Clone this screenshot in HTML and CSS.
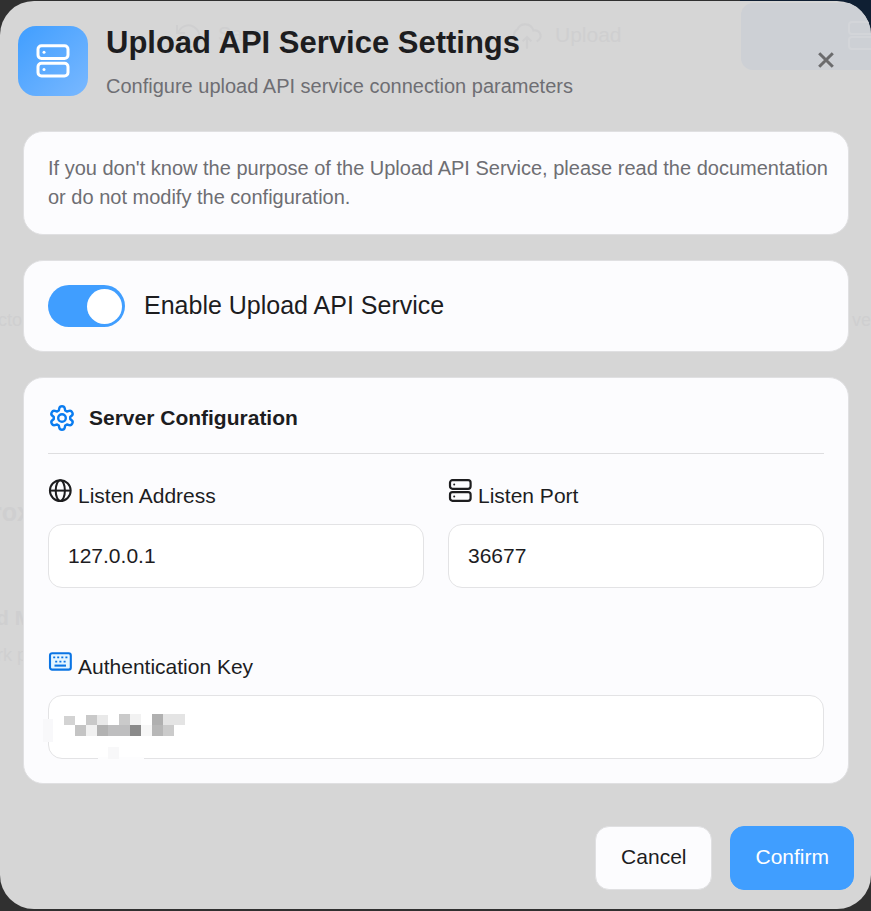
FILE: index.html
```html
<!DOCTYPE html>
<html lang="en">
<head>
    <meta charset="UTF-8">
    <meta name="viewport" content="width=device-width, initial-scale=1.0">
    <title>Upload API Service Settings</title>
    <link rel="stylesheet" href="styles.css">
</head>
<body>

    <div class="modal" role="dialog" aria-labelledby="modalTitle">

        <!-- Page showing faintly through the modal -->
        <div class="ghost" aria-hidden="true">
            <svg class="ghost-undo" viewBox="0 0 28 28"><path d="M3 3v8h8M4 11a11 11 0 1 1 1 9"/></svg>
            <span class="ghost-save">Save</span>
            <svg class="ghost-cloud" viewBox="0 0 28 28"><path d="M6 18a6 6 0 0 1-1-11 8 8 0 0 1 15 1 5 5 0 0 1 3 10M14 25V14M10 18l4-4 4 4"/></svg>
            <span class="ghost-upload">Upload</span>
            <div class="ghost-button">
                <svg class="ghost-server" viewBox="0 0 32 32"><rect x="2" y="2" width="28" height="12" rx="3"/><rect x="2" y="17" width="28" height="12" rx="3"/></svg>
            </div>
            <span class="ghost-left-1">cto</span>
            <span class="ghost-left-2">rox</span>
            <span class="ghost-left-3">d M</span>
            <span class="ghost-left-4">rk p</span>
            <span class="ghost-right">ve</span>
        </div>

        <div class="modal-header">
            <div class="header-icon">
                <svg viewBox="0 0 34 34" width="34" height="34" fill="none" stroke="#fff" stroke-width="3">
                    <rect x="2" y="1.7" width="30" height="12.8" rx="3.5"/>
                    <rect x="2" y="19.2" width="30" height="12.8" rx="3.5"/>
                    <circle cx="8" cy="8.2" r="1.5" fill="#fff" stroke="none"/>
                    <circle cx="8" cy="25.6" r="1.5" fill="#fff" stroke="none"/>
                </svg>
            </div>
            <div class="header-text">
                <h2 id="modalTitle">Upload API Service Settings</h2>
                <p>Configure upload API service connection parameters</p>
            </div>
            <button class="close-btn" type="button" aria-label="Close">
                <svg viewBox="0 0 16 16" width="16" height="16" fill="none" stroke="#6b6b6d" stroke-width="3"><path d="M1.2 1.2l13.6 13.6M14.8 1.2L1.2 14.8"/></svg>
            </button>
        </div>

        <div class="modal-body">
            <div class="card notice">
                <p>If you don't know the purpose of the Upload API Service, please read the documentation or do not modify the configuration.</p>
            </div>

            <div class="card switch-card">
                <input class="switch" type="checkbox" id="enableService" checked>
                <label for="enableService">Enable Upload API Service</label>
            </div>

            <div class="card config-card">
                <div class="section-title">
                    <svg viewBox="0 0 28 28" width="28" height="28" fill="none" stroke="#0a7cf0" stroke-width="2.4" stroke-linejoin="round">
                        <path d="M11.3 4.2 Q11.7 2.2 14 2.2 Q16.3 2.2 16.7 4.2 L17.2 6.5 L18.9 7.5 L21.2 6.8 Q23.1 6.3 24.1 8.1 Q25.4 10.2 23.9 11.5 L22.2 13 L22.2 15 L23.9 16.5 Q25.4 17.8 24.1 19.9 Q23.1 21.7 21.2 21.2 L18.9 20.5 L17.2 21.5 L16.7 23.8 Q16.3 25.8 14 25.8 Q11.7 25.8 11.3 23.8 L10.8 21.5 L9.1 20.5 L6.8 21.2 Q4.9 21.7 3.9 19.9 Q2.6 17.8 4.1 16.5 L5.8 15 L5.8 13 L4.1 11.5 Q2.6 10.2 3.9 8.1 Q4.9 6.3 6.8 6.8 L9.1 7.5 L10.8 6.5 Z"/>
                        <circle cx="14" cy="14" r="3.8"/>
                    </svg>
                    <h3>Server Configuration</h3>
                </div>

                <div class="form-row">
                    <div class="form-group">
                        <label for="listenAddress">
                            <svg viewBox="0 0 24 24" width="24" height="24" fill="none" stroke="#1d1d1f" stroke-width="2">
                                <circle cx="12.3" cy="12.6" r="10.4"/>
                                <ellipse cx="12.3" cy="12.6" rx="4.6" ry="10.4"/>
                                <path d="M2 12.6h20.6"/>
                            </svg>
                            <span>Listen Address</span>
                        </label>
                        <input type="text" id="listenAddress" value="127.0.0.1">
                    </div>
                    <div class="form-group">
                        <label for="listenPort">
                            <svg viewBox="0 0 24 24" width="24" height="24" fill="none" stroke="#1d1d1f" stroke-width="2.2">
                                <rect x="2" y="2.2" width="20.6" height="8.6" rx="2.5"/>
                                <rect x="2" y="14.2" width="20.6" height="8.6" rx="2.5"/>
                                <circle cx="6.2" cy="6.5" r="1" fill="#1d1d1f" stroke="none"/>
                                <circle cx="6.2" cy="18.5" r="1" fill="#1d1d1f" stroke="none"/>
                            </svg>
                            <span>Listen Port</span>
                        </label>
                        <input type="text" id="listenPort" value="36677">
                    </div>
                </div>

                <div class="form-group key-group">
                    <label for="authKey">
                        <svg viewBox="0 0 24 24" width="24" height="24" fill="none" stroke="#0a74e4" stroke-width="2.1">
                            <rect x="2" y="4.2" width="20.8" height="16.4" rx="2.2" fill="#e4f5ff"/>
                            <path d="M5.2 8.4h2M9.2 8.4h2M13.3 8.4h2M17.4 8.4h2M7.2 12.6h2M11.4 12.6h2M15.6 12.6h2" stroke-width="1.7"/>
                            <path d="M6.5 16.6h11.5"/>
                        </svg>
                        <span>Authentication Key</span>
                    </label>
                    <div class="key-field">
                        <input type="password" id="authKey">
                        <!-- pixelated key -->
                        <svg class="key-mask" viewBox="0 0 144 50" width="144" height="50" shape-rendering="crispEdges" aria-hidden="true">
                            <rect x="0" y="9" width="10" height="23" fill="#f8f8fa"/>
                            <rect x="21" y="6" width="11" height="9" fill="#d3d3d3"/>
                            <rect x="43" y="5" width="11" height="10" fill="#c9c9c9"/>
                            <rect x="54" y="5" width="11" height="10" fill="#e9e9e9"/>
                            <rect x="76" y="4" width="11" height="11" fill="#cacaca"/>
                            <rect x="87" y="4" width="11" height="11" fill="#f2f2f2"/>
                            <rect x="109" y="4" width="11" height="11" fill="#b0b0b0"/>
                            <rect x="120" y="4" width="22" height="11" fill="#e4e4e4"/>
                            <rect x="32" y="15" width="11" height="11" fill="#c4c4c4"/>
                            <rect x="43" y="15" width="11" height="11" fill="#f1f1f1"/>
                            <rect x="54" y="15" width="11" height="11" fill="#b2b2b2"/>
                            <rect x="65" y="15" width="22" height="11" fill="#bebebf"/>
                            <rect x="87" y="15" width="11" height="11" fill="#8a8a8a"/>
                            <rect x="98" y="15" width="11" height="11" fill="#f7f7f7"/>
                            <rect x="109" y="15" width="11" height="11" fill="#b7b7b7"/>
                            <rect x="120" y="15" width="11" height="11" fill="#cbcbcb"/>
                            <rect x="55" y="47" width="46" height="3" fill="#fdfdfe"/>
                            <rect x="65" y="37" width="11" height="12" fill="#f8f8f9"/>
                        </svg>
                    </div>
                </div>
            </div>
        </div>

        <div class="modal-footer">
            <button class="btn cancel-btn" type="button">Cancel</button>
            <button class="btn confirm-btn" type="button">Confirm</button>
        </div>
    </div>

</body>
</html>
```
FILE: styles.css
```css
* {
    margin: 0;
    padding: 0;
    box-sizing: border-box;
}
body {
    font-family: "Liberation Sans", Arial, sans-serif;
    background: linear-gradient(to right, #303030 85%, #0f1f33 85%) no-repeat #303030;
    background-size: 100% 60px;
    color: #1d1d1f;
    min-height: 100vh;
    padding: 1px 0 2px;
}
.modal {
    position: relative;
    display: flex;
    flex-direction: column;
    min-height: calc(100vh - 3px);
    background: #d6d6d6;
    border-radius: 34px;
    overflow: hidden;
}

/* header */
.modal-header {
    position: relative;
    display: flex;
    align-items: flex-start;
    gap: 18px;
    padding: 25px 34px 31px 18px;
}
.header-icon {
    display: flex;
    align-items: center;
    justify-content: center;
    width: 70px;
    height: 70px;
    border-radius: 18px;
    background: linear-gradient(135deg, #409eff, #79b8ff);
}
.header-text {
    flex: 1;
}
.header-text h2 {
    font-size: 31px;
    line-height: 34px;
}
.header-text p {
    font-size: 20px;
    line-height: 28px;
    margin-top: 12px;
    color: #6e6e73;
}
.close-btn {
    display: flex;
    align-items: center;
    justify-content: center;
    width: 22px;
    height: 68px;
    border: none;
    background: none;
    cursor: pointer;
}

/* cards */
.modal-body {
    position: relative;
    display: flex;
    flex-direction: column;
    gap: 25px;
    padding: 0 22px 0 23px;
}
.card {
    background: #fcfcfe;
    border: 1px solid #e0e0e2;
    border-radius: 20px;
    padding: 24px;
}
.notice {
    padding: 22px 16px 22px 24px;
}
.notice p {
    font-size: 20px;
    line-height: 29px;
    color: #6e6e73;
}
.switch-card {
    display: flex;
    align-items: center;
    gap: 19px;
}
.switch-card label {
    font-size: 25px;
    line-height: 30px;
    padding-bottom: 2px;
}
.config-card {
    padding-top: 26px;
}
.switch {
    appearance: none;
    display: flex;
    align-items: center;
    justify-content: flex-end;
    width: 77px;
    height: 42px;
    padding: 3px;
    border-radius: 21px;
    background: #409eff;
    cursor: pointer;
}
.switch::before {
    content: "";
    width: 35px;
    height: 35px;
    border-radius: 50%;
    background: #fff;
}
.section-title {
    display: flex;
    align-items: center;
    gap: 13px;
    padding-bottom: 21px;
    border-bottom: 1px solid #dedee0;
}
.section-title h3 {
    font-size: 21px;
    line-height: 28px;
}

/* form */
.form-row {
    display: grid;
    grid-template-columns: 1fr 1fr;
    gap: 24px;
    margin-top: 24px;
}
.key-group {
    margin-top: 61px;
}
.form-group label {
    display: flex;
    gap: 6px;
    height: 46px;
    font-size: 21px;
    line-height: 36px;
}
.form-group input {
    display: block;
    width: 100%;
    height: 64px;
    padding: 0 19px;
    border: 1px solid #e3e3e5;
    border-radius: 14px;
    background: #fff;
    color: #1d1d1f;
    font-family: inherit;
    font-size: 21px;
}
.key-field {
    position: relative;
}
.key-mask {
    position: absolute;
    left: -5px;
    top: 15px;
}

/* footer */
.modal-footer {
    position: relative;
    display: flex;
    justify-content: flex-end;
    gap: 18px;
    margin-top: auto;
    padding: 20px 17px 19px;
}
.btn {
    height: 64px;
    padding: 0 24px 2px;
    border: 1px solid #e0e0e2;
    border-radius: 14px;
    background: #fcfcfe;
    color: #1d1d1f;
    font-family: inherit;
    font-size: 21px;
    cursor: pointer;
}
.cancel-btn {
    padding: 0 25px 2px;
}
.confirm-btn {
    border-color: #409eff;
    background: #409eff;
    color: #fff;
}

/* page behind the modal */
.ghost {
    position: absolute;
    inset: 0;
    color: #cfcfd0;
    font-size: 18px;
    line-height: 24px;
}
.ghost svg {
    fill: none;
    stroke: #cfcfd0;
    stroke-width: 2;
}
.ghost > * {
    position: absolute;
}
.ghost-undo {
    left: 174px;
    top: 21px;
    width: 28px;
}
.ghost-save {
    left: 218px;
    top: 21px;
    font-size: 20px;
}
.ghost-cloud {
    left: 512px;
    top: 21px;
    width: 30px;
}
.ghost-upload {
    left: 555px;
    top: 22px;
    font-size: 21px;
}
.ghost-button {
    right: 0;
    top: 2px;
    width: 130px;
    height: 67px;
    border-radius: 12px 0 0 12px;
    background: #cdd0d5;
    overflow: hidden;
}
.ghost .ghost-server {
    float: right;
    width: 32px;
    margin: 17px -8px 0 0;
    stroke: #d3d5d9;
}
.ghost-left-1 {
    left: -2px;
    top: 307px;
}
.ghost-left-2 {
    left: -8px;
    top: 499px;
    font-size: 25px;
    font-weight: bold;
}
.ghost-left-3 {
    left: -4px;
    top: 605px;
    font-size: 21px;
    font-weight: bold;
}
.ghost-left-4 {
    left: -3px;
    top: 642px;
}
.ghost-right {
    right: 0;
    top: 307px;
}
```
